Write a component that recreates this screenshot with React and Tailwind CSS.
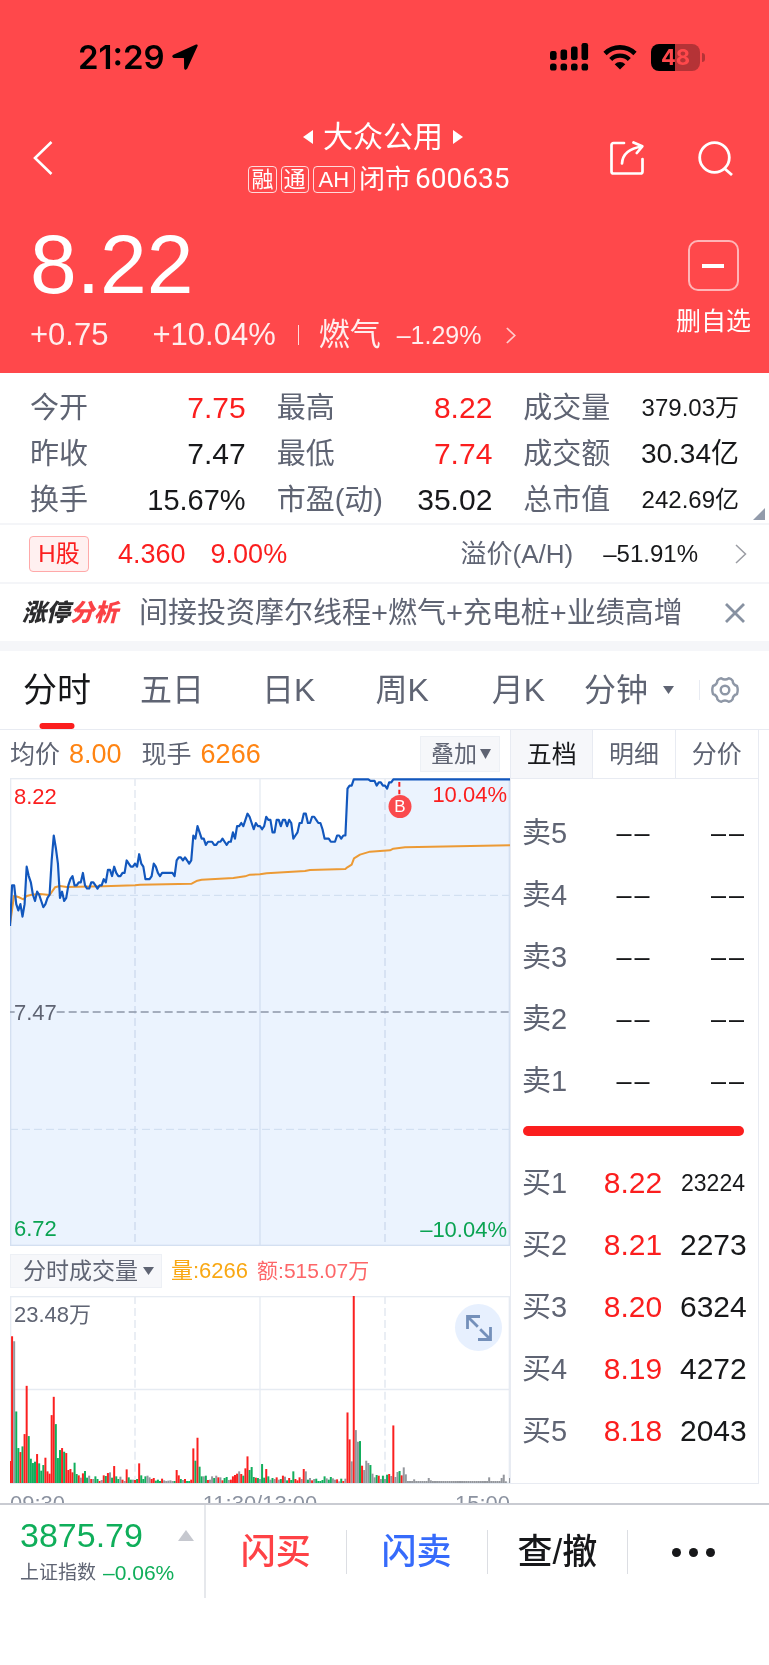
import React from "react";

const FONT = "font-['Liberation_Sans','Noto_Sans_CJK_SC',sans-serif]";

const TICKS = [
  47, 34, 34, 40, 42, 40, 44, 40, 28, 31, 33, 37, 39, 36, 37, 39, 41, 40, 38, 37, 26, 18, 22, 27, 38, 36, 39, 38, 34, 32,
  31, 34, 34, 33, 33, 30, 34, 35, 35, 33, 33, 34, 35, 34, 34, 32, 33, 29, 29, 31, 28, 30, 31, 31, 30, 30, 26, 27, 28, 28,
  27, 28, 24, 27, 28, 32, 32, 32, 31, 27, 28, 30, 31, 30, 30, 30, 30, 30, 30, 31, 26, 25, 25, 26, 25, 26, 27, 26, 18, 19,
  15, 17, 19, 19, 21, 20, 20, 20, 21, 21, 20, 20, 19, 20, 21, 20, 20, 17, 19, 15, 15, 14, 15, 13, 11, 12, 14, 16, 14, 15,
  15, 16, 15, 12, 13, 13, 17, 17, 13, 13, 15, 13, 13, 15, 13, 14, 19, 18, 17, 14, 14, 11, 11, 14, 14, 12, 12, 13, 14, 14,
  16, 19, 19, 19, 20, 20, 20, 18, 18, 19, 18, 18, 3, 2, 2, 0, 0, 0, 0, 0, 0, 0, 0, 0.5, 0.5, 0.5, 2, 1, 1, 2, 2, 3, 1, 1, 0,
];
const PRICE_POINTS = TICKS.map((t, i) => `${i * 6.25},${4 + t * 9.36}`).join(" ") + " 1500,4";
const AVERAGE_POINTS =
  "0,438 6,396 12,354 25,357 40,364 50,354 65,350 90,348 119,351 135,328 150,324 170,327 280,325 375,322 390,320 545,317 562,308 575,305 670,300 705,295 720,290 750,289 770,286 885,279 900,276 1006,273 1012,268 1025,260 1032,241 1050,230 1080,221 1140,217 1150,212 1185,208 1500,202";

const VOLUMES = (
  "66r 441r 426x 215g 105g 93r 110g 147r 292r 141g 73g 60g 64g 87r 59g 37g 54g 76r 35r 28r 204r 259r 177g 75g 99g 105r 94g 90r 39r 42r " +
  "32r 61g 27g 23r 16x 29r 36g 16g 22x 12r 12x 20g 12g 6r 9x 23r 21g 30r 32x 16g 51r 20g 12g 19x 10r 6x 41r 17g 10g 10x " +
  "9r 12g 59r 23g 12g 20g 22x 17x 12r 15r 7g 10g 6g 13r 8x 6x 7x 8x 6x 6g 39r 23r 12g 9x 12r 6g 6g 10r 104r 67g " +
  "136r 49g 20g 20x 22g 9r 10x 20x 15g 22x 17r 17x 8r 15g 18g 9x 10r 20r 24r 28r 35x 27r 22g 44r 80r 39g 48g 18g 16r 15g " +
  "12x 57g 16g 42r 20g 10x 15g 12x 17r 10x 12g 22r 19x 8g 15r 9g 35g 12r 8r 17r 12x 42r 35x 10g 15x 8r 12x 13g 6g 6g " +
  "9g 20g 14x 10g 18g 14x 10x 11r 5x 13g 6r 13x 212r 131r 65x 562r 159x 124x 126g 52r 39x 67x 60x 54g 28x 17x 24g 22r 12x 22g " +
  "12x 25g 27r 21x 173r 18x 33x 36g 23r 47x 26x 6x 6x 6x 11x 6x 6x 6x 6x 6x 6x 15x 8x 6x 6x 6x 6x 6x 6x 6x " +
  "6x 6x 6x 6x 6x 6x 6x 6x 6x 6x 6x 6x 6x 6x 6x 6x 6x 6x 6x 6x 17x 6x 6x 6x 6x 6x 15x 25x 5x 0x 15x"
).split(" ");
const VOLUME_FILL = { r: "#fb2020", g: "#11ae5c", x: "#94979d" };

const QUOTES = [
  ["今开", "7.75", "text-[30px] text-[#fb1e1e]"],
  ["最高", "8.22", "text-[30px] text-[#fb1e1e]"],
  ["成交量", "379.03万", "text-[24px] text-[#17181a]"],
  ["昨收", "7.47", "text-[30px] text-[#17181a]"],
  ["最低", "7.74", "text-[30px] text-[#fb1e1e]"],
  ["成交额", "30.34亿", "text-[28px] text-[#17181a]"],
  ["换手", "15.67%", "text-[29px] text-[#17181a]"],
  ["市盈(动)", "35.02", "text-[30px] text-[#17181a]"],
  ["总市值", "242.69亿", "text-[24px] text-[#17181a]"],
];
const SELLS = ["卖5", "卖4", "卖3", "卖2", "卖1"];
const BUYS = [
  ["买1", "8.22", "23224", "text-[23px]"],
  ["买2", "8.21", "2273", "text-[30px]"],
  ["买3", "8.20", "6324", "text-[30px]"],
  ["买4", "8.19", "4272", "text-[30px]"],
  ["买5", "8.18", "2043", "text-[30px]"],
];

const TRIANGLES = {
  down: "0,0 12,0 6,10",
  up: "0,10 12,10 6,0",
  left: "12,0 12,10 0,5",
  right: "0,0 0,10 12,5",
  corner: "12,0 12,10 0,10",
};

function Triangle({ className, dir = "down" }) {
  return (
    <svg className={className} viewBox="0 0 12 10" preserveAspectRatio="none" fill="currentColor" aria-hidden="true">
      <polygon points={TRIANGLES[dir]} />
    </svg>
  );
}

function Chevron({ className, width = 2 }) {
  return (
    <svg className={className} viewBox="0 0 12 20" fill="none" stroke="currentColor" strokeWidth={width} aria-hidden="true">
      <path d="M1 1 10.5 10 1 19" />
    </svg>
  );
}

function StatusBar() {
  return (
    <div className="flex h-[40px] items-center justify-between pr-[64px] pl-[78px] text-black">
      <div className="flex items-center gap-[7px]">
        <span className="font-['Inter',sans-serif] text-[33px] leading-[40px] font-semibold">21:29</span>
        <svg className="h-[26px] w-[26px]" viewBox="0 0 26 26" fill="currentColor" aria-hidden="true">
          <path d="M24 .6 1.4 10.7c-1.8.9-1.4 3.1.5 3.2l9.6.1c.3 0 .5.2.5.5l.1 9.5c.1 2 2.3 2.4 3.2.6L25.5 2.3c.6-1.3-.3-2.3-1.5-1.7Z" />
        </svg>
      </div>
      <div className="flex items-center gap-[14px]">
        <svg className="h-[28px] w-[39px]" viewBox="0 0 39 28" fill="currentColor" aria-hidden="true">
          <rect x="0" y="8" width="6.6" height="9" rx="2.2" />
          <rect x="10.5" y="6.5" width="6.6" height="10.5" rx="2.2" />
          <rect x="21" y="3.5" width="6.6" height="13.5" rx="2.2" />
          <rect x="31.5" y="0" width="6.6" height="17" rx="2.2" />
          <rect x="0" y="20.5" width="6.6" height="7" rx="2.6" />
          <rect x="10.5" y="20.5" width="6.6" height="7" rx="2.6" />
          <rect x="21" y="20.5" width="6.6" height="7" rx="2.6" />
          <rect x="31.5" y="20.5" width="6.6" height="7" rx="2.6" />
        </svg>
        <svg className="h-[25px] w-[34px]" viewBox="0 0 34 25" fill="none" stroke="currentColor" aria-hidden="true">
          <path d="M2 8.5a21.5 21.5 0 0 1 30 0" strokeWidth="4.6" />
          <path d="M7.7 14.5a13.3 13.3 0 0 1 18.6 0" strokeWidth="4.3" />
          <path d="M17 24.5 11.7 19.2a7.5 7.5 0 0 1 10.6 0Z" fill="currentColor" stroke="none" />
        </svg>
        <div className="flex items-center gap-[2px]">
          <div className="flex h-[27px] w-[49px] items-center justify-center rounded-[8px] bg-linear-to-r from-black from-48% to-[#b53336] to-48% font-['Inter',sans-serif] text-[22px] leading-[27px] font-bold text-[#ff484b]">
            48
          </div>
          <span className="h-[9px] w-[3px] rounded-r-full bg-[#b53336]" />
        </div>
      </div>
    </div>
  );
}

function Badge({ children }) {
  return (
    <span className="flex h-[27px] items-center rounded-[4px] border border-white/80 px-[2px] text-[22px] leading-[25px]">
      {children}
    </span>
  );
}

function Header() {
  return (
    <header className="bg-[#ff484b] pt-[37px] pb-[20px] text-white">
      <StatusBar />
      <nav className="mt-[42px] grid grid-cols-[1fr_auto_1fr] items-center pr-[36px] pl-[33px]">
        <button type="button" aria-label="返回" className="justify-self-start">
          <svg className="block h-[34px] w-[20px]" viewBox="0 0 20 34" fill="none" stroke="currentColor" strokeWidth="2.6" aria-hidden="true">
            <path d="M18.5 1 2 17l16.5 16" />
          </svg>
        </button>
        <div className="flex flex-col items-center gap-[6px]">
          <h1 className="flex h-[36px] items-center gap-[10px] text-[30px] leading-[36px]">
            <button type="button" aria-label="上一只"><Triangle dir="left" className="h-[14px] w-[10px]" /></button>
            大众公用
            <button type="button" aria-label="下一只"><Triangle dir="right" className="h-[14px] w-[10px]" /></button>
          </h1>
          <div className="flex h-[36px] items-center gap-[4px] pr-[8px]">
            <Badge>融</Badge>
            <Badge>通</Badge>
            <Badge><span className="px-[3px]">AH</span></Badge>
            <span className="text-[26px]">闭市</span>
            <span className="font-['Roboto',sans-serif] text-[28px] leading-[36px]">600635</span>
          </div>
        </div>
        <div className="flex items-center gap-[54px] justify-self-end">
          <button type="button" aria-label="分享">
            <svg className="block h-[34px] w-[34px]" viewBox="0 0 34 34" fill="none" stroke="currentColor" strokeWidth="2.7" strokeLinejoin="round" strokeLinecap="round" aria-hidden="true">
              <path d="M14 2H3.5A2 2 0 0 0 1.5 4v26.500a2 2 0 0 0 2 2H30.500a2 2 0 0 0 2-2V18" />
              <path d="M12 22.5C12.5 14 18 7.500 32 5.500M23.500 1.500 32.300 5.300 26.800 12" />
            </svg>
          </button>
          <button type="button" aria-label="搜索">
            <svg className="block h-[35px] w-[35px]" viewBox="0 0 35 35" fill="none" stroke="currentColor" strokeWidth="2.8" aria-hidden="true">
              <circle cx="16.5" cy="16.5" r="14.8" />
              <path d="M26.5 27.5 34 34" />
            </svg>
          </button>
        </div>
      </nav>
      <div className="mt-[26px] flex items-start justify-between pr-[18px] pl-[30px]">
        <div>
          <p className="text-[84px] leading-[82px]">8.22</p>
          <div className="mt-[12px] flex h-[36px] items-center text-[31px] leading-[36px] text-white/90">
            <span>+0.75</span>
            <span className="ml-[44px]">+10.04%</span>
            <span className="ml-[22px] h-[20px] w-px bg-white/80" />
            <a href="#sector" className="ml-[20px] flex items-center">
              燃气
              <span className="ml-[16px] text-[25px]">–1.29%</span>
              <Chevron className="ml-[24px] h-[17px] w-[10px] opacity-80" />
            </a>
          </div>
        </div>
        <button type="button" className="flex flex-col items-center gap-[15px] pt-[17px]">
          <span className="flex h-[51px] w-[51px] items-center justify-center rounded-[10px] border-2 border-white/60">
            <span className="h-[4px] w-[22px] bg-white" />
          </span>
          <span className="text-[25px] leading-[30px]">删自选</span>
        </button>
      </div>
    </header>
  );
}

function Summary() {
  return (
    <>
      <section className="relative border-b-2 border-[#f4f5f8] pt-[12px]">
        <dl className="grid grid-cols-3 gap-x-[31px] px-[30px]">
          {QUOTES.map(([label, value, style]) => (
            <div key={label} className="flex h-[46px] items-center justify-between leading-[46px] whitespace-nowrap">
              <dt className="text-[29px] text-[#5f6473]">{label}</dt>
              <dd className={style}>{value}</dd>
            </div>
          ))}
        </dl>
        <Triangle dir="corner" className="absolute right-[4px] bottom-[3px] h-[12px] w-[12px] text-[#929bab]" />
      </section>
      <a href="#h-share" className="flex h-[59px] items-center border-b-2 border-[#f4f5f8] pr-[22px] pl-[29px] text-[26px] leading-[36px]">
        <span className="flex h-[36px] w-[60px] items-center justify-center rounded-[4px] border border-[#ffa9a9] bg-[#fff0f0] text-[24px] text-[#fb1e1e]">H股</span>
        <span className="ml-[29px] text-[27px] text-[#fb1e1e]">4.360</span>
        <span className="ml-[25px] text-[27px] text-[#fb1e1e]">9.00%</span>
        <span className="ml-auto text-[#5f6473]">溢价(A/H)</span>
        <span className="ml-[30px] text-[24px] text-[#17181a]">–51.91%</span>
        <Chevron width={1.5} className="ml-[37px] h-[20px] w-[12px] text-[#9a9ca3]" />
      </a>
      <section className="flex h-[57px] items-center pr-[24px] pl-[22px]">
        <strong className="text-[24px] leading-[36px] font-black text-[#2c2c2e] italic">
          涨停<span className="text-[#fb4246]">分析</span>
        </strong>
        <p className="ml-[21px] text-[29px] leading-[40px] whitespace-nowrap text-[#5f6473]">间接投资摩尔线程+燃气+充电桩+业绩高增</p>
        <button type="button" aria-label="关闭" className="ml-auto">
          <svg className="block h-[20px] w-[20px] text-[#8791a1]" viewBox="0 0 20 20" fill="none" stroke="currentColor" strokeWidth="2.8" aria-hidden="true">
            <path d="M1 1 19 19M19 1 1 19" />
          </svg>
        </button>
      </section>
    </>
  );
}

function PeriodTabs() {
  return (
    <div role="tablist" className="flex h-[79px] items-center border-b border-[#e8ebf2] pr-[30px] pl-[23px] text-[32px] leading-[44px] text-[#5f6473]">
      <button type="button" role="tab" aria-selected="true" className="relative flex h-full items-center text-[34px] text-[#17181a]">
        分时
        <span className="absolute bottom-0 left-1/2 h-[6px] w-[35px] -translate-x-1/2 rounded-[3px] bg-[#fb1e1e]" />
      </button>
      <button type="button" role="tab" className="ml-[49px]">五日</button>
      <button type="button" role="tab" className="ml-[58px]">日K</button>
      <button type="button" role="tab" className="ml-[60px]">周K</button>
      <button type="button" role="tab" className="ml-[63px]">月K</button>
      <button type="button" role="tab" className="ml-[39px] flex items-center">
        分钟
        <Triangle className="ml-[15px] h-[8px] w-[11px]" />
      </button>
      <span className="ml-auto h-[20px] w-px bg-[#e8ebf2]" />
      <button type="button" aria-label="设置" className="ml-[11px]">
        <svg className="block h-[28px] w-[28px] text-[#8e97a6]" viewBox="0 0 28 28" fill="none" stroke="currentColor" strokeWidth="2.4" strokeLinejoin="round" aria-hidden="true">
          <path d="M10.2 2.2Q14 5 17.8 2.2Q20.2 2.5 21.6 4.6Q21.8 8.6 26 10Q27.4 14 26 18Q21.8 19.4 21.600 23.400Q20.200 25.500 17.800 25.800Q14 23 10.200 25.800Q7.800 25.500 6.400 23.400Q6.200 19.400 2 18Q.6 14 2 10Q6.200 8.600 6.400 4.600Q7.800 2.500 10.200 2.200Z" />
          <circle cx="14" cy="14" r="4.3" />
        </svg>
      </button>
    </div>
  );
}

function Grid({ height, rows }) {
  return (
    <g stroke="#e6ebf2" fill="none">
      <path d={`M375 0V${height}M1125 0V${height}`} strokeWidth="5" strokeDasharray="24 12" />
      <path d={`M750 0V${height}`} strokeWidth="4" />
      {rows}
      <rect x="2" y="2" width="1496" height={height - 4} strokeWidth="4" />
    </g>
  );
}

function PriceChart() {
  return (
    <div className="relative h-[468px] text-[22px] leading-[26px]">
      <svg className="block h-full w-full" viewBox="0 0 1500 1404" preserveAspectRatio="none" role="img" aria-label="分时走势">
        <polygon points={`0,1404 ${PRICE_POINTS} 1500,1404`} fill="#ebf3fe" />
        <g className="mix-blend-multiply">
          <Grid height={1404} rows={<path d="M0 352H1500M0 1054H1500" strokeWidth="3" strokeDasharray="24 12" stroke="#dfe7f0" />} />
        </g>
        <path d="M0 702H14M140 702H1500" stroke="#8d97a8" strokeWidth="4" strokeDasharray="24 12" />
        <polyline points={AVERAGE_POINTS} fill="none" stroke="#ec9a35" strokeWidth="6" strokeLinejoin="round" />
        <polyline points={PRICE_POINTS} fill="none" stroke="#1257bd" strokeWidth="6.5" strokeLinejoin="round" />
        <path d="M1168 12V60" stroke="#fb1e1e" strokeWidth="6" strokeDasharray="14 9" />
      </svg>
      <span className="absolute top-[6px] left-[4px] text-[#fb1e1e]">8.22</span>
      <span className="absolute top-[4px] right-[3px] text-[#fb1e1e]">10.04%</span>
      <span className="absolute top-[222px] left-[4px] text-[#5f6473]">7.47</span>
      <span className="absolute bottom-[4px] left-[4px] text-[#0aa352]">6.72</span>
      <span className="absolute right-[3px] bottom-[3px] text-[#0aa352]">–10.04%</span>
      <span className="absolute top-[17px] left-[78%] flex h-[23px] w-[23px] -translate-x-1/2 items-center justify-center rounded-full bg-[#fa4a4d] text-[17px] leading-[23px] text-white">B</span>
    </div>
  );
}

function VolumeChart() {
  return (
    <div className="relative h-[188px] border-b border-[#e6ebf2]">
      <svg className="block h-full w-full" viewBox="0 0 1500 562" preserveAspectRatio="none" role="img" aria-label="分时成交量">
        <Grid height={562} rows={<path d="M0 281H1500" strokeWidth="4" />} />
        {VOLUMES.map((item, i) => {
          const height = parseInt(item, 10);
          return <rect key={i} x={i * 6.25 - 3} y={562 - height} width="6" height={height} fill={VOLUME_FILL[item.slice(-1)]} />;
        })}
      </svg>
      <span className="absolute top-[5px] left-[4px] text-[22px] leading-[28px] text-[#5f6473]">23.48万</span>
      <button type="button" aria-label="全屏" className="absolute top-[8px] right-[8px] flex h-[47px] w-[47px] items-center justify-center rounded-full bg-[#e7f0fe] text-[#7490ba]">
        <svg className="h-[28px] w-[28px]" viewBox="0 0 28 28" fill="none" stroke="currentColor" strokeWidth="2.8" aria-hidden="true">
          <path d="M2.5 15V2.5H15M2.500 2.500 12.800 12.800M25.500 13v12.500H13M25.500 25.500 15.200 15.200" />
        </svg>
      </button>
    </div>
  );
}

function IntradayPanel() {
  return (
    <div className="min-w-0 flex-1 pl-[10px]">
      <div className="flex h-[48px] items-center pr-[10px] text-[25px] leading-[34px] text-[#5f6473]">
        <span>均价</span>
        <span className="ml-[9px] text-[27px] text-[#ff8412]">8.00</span>
        <span className="ml-[20px]">现手</span>
        <span className="ml-[9px] text-[27px] text-[#ff8412]">6266</span>
        <button type="button" className="ml-auto flex h-[36px] items-center border border-[#edf0f5] bg-[#f6f7fa] pr-[8px] pl-[10px] text-[23px]">
          叠加
          <Triangle className="ml-[3px] h-[10px] w-[11px]" />
        </button>
      </div>
      <PriceChart />
      <div className="flex h-[50px] items-center leading-[34px]">
        <button type="button" className="flex h-[34px] items-center border border-[#edf0f5] bg-[#f6f7fa] pr-[7px] pl-[12px] text-[23px] text-[#5f6473]">
          分时成交量
          <Triangle className="ml-[5px] h-[8px] w-[11px]" />
        </button>
        <span className="ml-[9px] text-[22px] text-[#f9a814]">量:6266</span>
        <span className="ml-[9px] text-[21px] text-[#fd6668]">额:515.07万</span>
      </div>
      <VolumeChart />
      <div className="flex h-[19px] items-start justify-between overflow-hidden pt-[7px] text-[22px] leading-[26px] text-[#8b92a0]">
        <span>09:30</span>
        <span>11:30/13:00</span>
        <span>15:00</span>
      </div>
    </div>
  );
}

function OrderBook() {
  return (
    <div className="mr-[10px] flex w-[249px] shrink-0 flex-col self-start border-x border-b border-[#e8ebf2]">
      <div role="tablist" className="grid h-[49px] grid-cols-3 divide-x divide-[#e8ebf2] border-b border-[#e8ebf2] text-[25px] leading-[34px] text-[#5f6473]">
        <button type="button" role="tab" aria-selected="true" className="bg-[#f6f7fa] text-[#17181a]">五档</button>
        <button type="button" role="tab">明细</button>
        <button type="button" role="tab">分价</button>
      </div>
      <table className="mt-[23px] w-full table-fixed text-[29px] leading-[40px] text-[#5f6473]">
        <tbody>
          {SELLS.map((label) => (
            <tr key={label} className="h-[62px]">
              <th scope="row" className="w-[75px] pl-[11px] text-left font-normal">{label}</th>
              <td className="w-[94px]">
                <span className="flex justify-center gap-[3px] text-[27px] text-[#17181a]"><span>–</span><span>–</span></span>
              </td>
              <td className="pr-[14px]">
                <span className="flex justify-end gap-[3px] text-[27px] text-[#17181a]"><span>–</span><span>–</span></span>
              </td>
            </tr>
          ))}
        </tbody>
      </table>
      <div className="mt-[14px] mr-[14px] mb-[16px] ml-[12px] h-[10px] rounded-full bg-[#fb1e1e]" />
      <table className="mb-[21px] w-full table-fixed text-[29px] leading-[40px] text-[#5f6473]">
        <tbody>
          {BUYS.map(([label, price, amount, size]) => (
            <tr key={label} className="h-[62px]">
              <th scope="row" className="w-[75px] pl-[11px] text-left font-normal">{label}</th>
              <td className="w-[94px] text-center text-[30px] text-[#fb1e1e]">{price}</td>
              <td className={`${size} pr-[13px] text-right text-[#17181a]`}>{amount}</td>
            </tr>
          ))}
        </tbody>
      </table>
    </div>
  );
}

function BottomBar() {
  return (
    <footer className="flex flex-1 items-start border-t-2 border-[#c9cbd2] bg-white">
      <a href="#index" className="relative h-[93px] w-[206px] shrink-0 border-r-2 border-[#e6e8ec] pt-[10px] pl-[20px]">
        <span className="block text-[34px] leading-[40px] text-[#0fae5a]">3875.79</span>
        <span className="mt-[4px] flex items-center gap-[7px] text-[19px] leading-[28px] whitespace-nowrap text-[#5f6473]">
          上证指数
          <span className="text-[21px] text-[#0fae5a]">–0.06%</span>
        </span>
        <Triangle dir="up" className="absolute top-[25px] right-[10px] h-[11px] w-[16px] text-[#c6c8cf]" />
      </a>
      <div className="mt-[25px] grid h-[44px] flex-1 grid-cols-4 divide-x divide-[#dcdee3] text-[35px] leading-[44px] font-medium">
        <button type="button" className="text-[#fe4246]">闪买</button>
        <button type="button" className="text-[#366bfb]">闪卖</button>
        <button type="button" className="text-[#17181a]">查/撤</button>
        <button type="button" aria-label="更多" className="flex items-center justify-center gap-[8px] pr-[11px]">
          <span className="h-[9px] w-[9px] rounded-full bg-[#17181a]" />
          <span className="h-[9px] w-[9px] rounded-full bg-[#17181a]" />
          <span className="h-[9px] w-[9px] rounded-full bg-[#17181a]" />
        </button>
      </div>
    </footer>
  );
}

export default function App() {
  return (
    <div className={`${FONT} flex min-h-screen flex-col bg-white`}>
      <Header />
      <main>
        <Summary />
        <div className="h-[10px] bg-[#f5f6f9]" />
        <PeriodTabs />
        <div className="flex">
          <IntradayPanel />
          <OrderBook />
        </div>
      </main>
      <BottomBar />
    </div>
  );
}
